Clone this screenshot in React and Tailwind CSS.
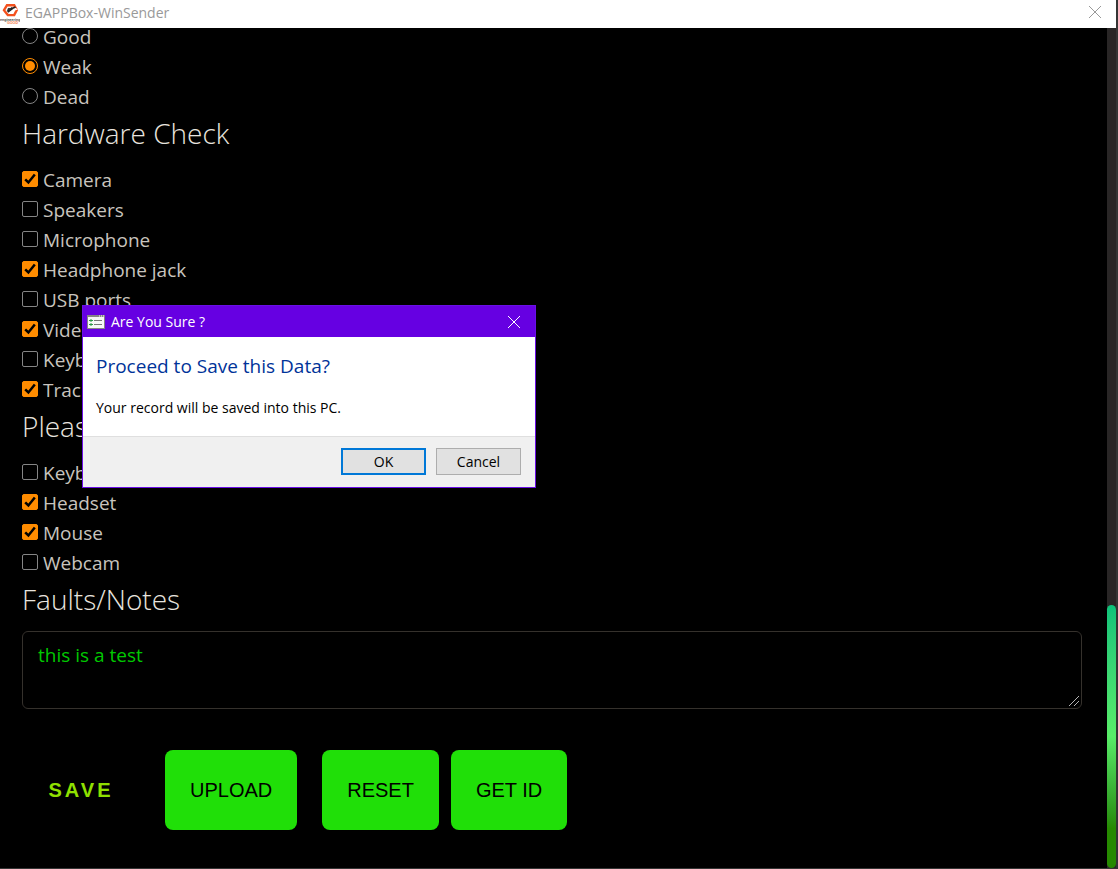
import { useState } from "react";

const battery = ["Good", "Weak", "Dead"];

const hardware = [
  ["Camera", true],
  ["Speakers", false],
  ["Microphone", false],
  ["Headphone jack", true],
  ["USB ports", false],
  ["Video ports", true],
  ["Keyboard", false],
  ["Trackpad", true],
];

const accessories = [
  ["Keyboard", false],
  ["Headset", true],
  ["Mouse", true],
  ["Webcam", false],
];

function AppLogo() {
  return (
    <svg viewBox="0 0 20 24" className="h-6 w-5 shrink-0" aria-hidden="true">
      <path d="M7 3.2h7.2l2.600 4.900-2.600 5H7.800L4 8.200z" fill="none" stroke="#f4511e" strokeWidth="2.400" />
      <path d="M14 5l4 2.500-3.500 1z" fill="#fff" />
      <path d="M7.500 9.800l5-3.800" stroke="#222" strokeWidth="2.400" />
      <circle cx="9" cy="7.200" r="1.500" fill="#333" />
      <path d="M12 6.500l3.500-1.500" stroke="#222" strokeWidth="1.800" />
      <text x="0" y="18.500" fontSize="3.600" fontWeight="700" fill="#444" fontFamily="Liberation Sans, sans-serif">
        engineering
      </text>
      <text x="7" y="22" fontSize="3.600" fontWeight="700" fill="#f4733d" fontFamily="Liberation Sans, sans-serif">
        GOOD
      </text>
    </svg>
  );
}

function CloseIcon() {
  return (
    <svg viewBox="0 0 12 12" className="size-3" fill="none" stroke="currentColor" aria-hidden="true">
      <path d="M0 0l12 12M12 0L0 12" />
    </svg>
  );
}

function FormIcon() {
  return (
    <svg viewBox="0 0 18 14" className="h-3.5 w-[18px] shrink-0" aria-hidden="true">
      <rect x="0.500" y="0.500" width="17" height="13" fill="#f7f7f7" stroke="#858585" />
      <path d="M1 1.500h16" stroke="#858585" />
      <path d="M12 1h1M14 1h1M16 1h1" stroke="#fff" />
      <path d="M7 5.500h8M7 9.500h8" stroke="#777" />
      <path d="M2 5.500h4M2 9.500h4" stroke="#2d9a46" />
      <path d="M4 4v3M4 8v3" stroke="#2d9a46" />
    </svg>
  );
}

function Tick() {
  return (
    <svg
      viewBox="0 0 16 16"
      className="pointer-events-none col-start-1 row-start-1 hidden size-4 peer-checked:block"
      fill="none"
      stroke="#000"
      strokeWidth="2.500"
      aria-hidden="true"
    >
      <path d="M3.200 8.300l3.200 3.200L12.800 3.500" />
    </svg>
  );
}

function CheckRow({ label, checked }) {
  return (
    <label className="flex h-[30px] items-center gap-[5px]">
      <span className="-mt-0.5 grid">
        <input
          type="checkbox"
          defaultChecked={checked}
          className="peer col-start-1 row-start-1 size-4 appearance-none rounded-[2px] border border-[#858585] bg-black checked:border-[#ff8c00] checked:bg-[#ff8c00]"
        />
        <Tick />
      </span>
      {label}
    </label>
  );
}

function RadioRow({ label, checked }) {
  return (
    <label className="flex h-[30px] items-center gap-[5px]">
      <input
        type="radio"
        name="battery"
        defaultChecked={checked}
        className="-mt-0.5 size-4 appearance-none rounded-full border border-[#858585] bg-black bg-clip-content p-0.5 checked:border-[#ff8c00] checked:bg-[#ff8c00]"
      />
      {label}
    </label>
  );
}

function Heading({ children }) {
  return <h2 className="mb-2.5 text-[28px] leading-[43px] font-light text-[#e8e4df]">{children}</h2>;
}

function ActionButton({ children, className }) {
  return (
    <button
      type="button"
      className={"h-20 rounded-lg bg-[#20df08] px-[25px] text-[20px] font-medium text-black " + className}
    >
      {children}
    </button>
  );
}

function ConfirmDialog({ onClose }) {
  const button = "h-[27px] w-[85px] bg-[#e1e1e1] leading-5 ";
  return (
    <div
      role="dialog"
      aria-labelledby="dialog-title"
      className="absolute top-[305px] left-[82px] w-[454px] border border-[#6a0fe6] bg-white text-[14px] text-black"
    >
      <div className="flex h-[31px] items-center gap-1.5 bg-[#6600e2] pr-[15px] pl-1 text-white">
        <FormIcon />
        <span id="dialog-title" className="flex-1">Are You Sure ?</span>
        <button type="button" aria-label="Close" onClick={onClose}>
          <CloseIcon />
        </button>
      </div>
      <div className="h-[99px] px-[13px] pt-[15px]">
        <h3 className="text-[19px] leading-7 text-[#003399]">Proceed to Save this Data?</h3>
        <p className="mt-4 leading-6">Your record will be saved into this PC.</p>
      </div>
      <div className="flex h-[51px] items-start justify-end gap-2.5 border-t border-[#dfdfdf] bg-[#f0f0f0] pt-[11px] pr-3.5">
        <button type="button" onClick={onClose} className={button + "border-2 border-[#0078d7]"}>
          OK
        </button>
        <button type="button" onClick={onClose} className={button + "border border-[#adadad]"}>
          Cancel
        </button>
      </div>
    </div>
  );
}

export default function App() {
  const [open, setOpen] = useState(true);
  return (
    <div className="relative flex h-screen flex-col overflow-hidden border-r-2 border-b border-[#353535] bg-black font-['Open_Sans','Noto_Sans',sans-serif]">
      <header className="flex h-7 shrink-0 items-center gap-[5px] bg-white pr-[15px] text-[#999]">
        <AppLogo />
        <h1 className="-mt-1 flex-1 text-[14px]">EGAPPBox-WinSender</h1>
        <button type="button" aria-label="Close window" className="-mt-1">
          <CloseIcon />
        </button>
      </header>

      <div className="flex min-h-0 flex-1">
        <main className="min-w-0 flex-1 overflow-hidden pr-[25px] pl-[22px] text-[19px] text-[#c8c4be]">
          <form className="-mt-1.5" onSubmit={(event) => event.preventDefault()}>
            {battery.map((name) => (
              <RadioRow key={name} label={name} checked={name === "Weak"} />
            ))}

            <Heading>Hardware Check</Heading>
            {hardware.map(([name, checked]) => (
              <CheckRow key={name} label={name} checked={checked} />
            ))}

            <Heading>Please Check</Heading>
            {accessories.map(([name, checked]) => (
              <CheckRow key={name} label={name} checked={checked} />
            ))}

            <Heading>Faults/Notes</Heading>
            <div className="relative">
              <textarea
                aria-label="Faults/Notes"
                defaultValue="this is a test"
                className="block h-[78px] w-full resize-y rounded-md border border-[#35312c] bg-black px-[15px] py-2 leading-[30px] text-[#00c800] [&::-webkit-resizer]:hidden"
              />
              <svg
                viewBox="0 0 12 12"
                className="pointer-events-none absolute right-0.5 bottom-0.5 size-3"
                stroke="#b5b5b5"
                aria-hidden="true"
              >
                <path d="M1 11L11 1M6 11l5-5" />
              </svg>
            </div>

            <div className="mt-[41px] flex font-['Liberation_Sans',Arial,sans-serif]">
              <button
                type="button"
                className="h-20 w-[118px] text-[20px] font-bold tracking-[3px] text-[#90e000]"
              >
                SAVE
              </button>
              <ActionButton className="ml-[25px]">UPLOAD</ActionButton>
              <ActionButton className="ml-[25px]">RESET</ActionButton>
              <ActionButton className="ml-3">GET ID</ActionButton>
            </div>
          </form>
        </main>

        <div className="flex w-[9px] flex-col justify-end bg-[#292626]" aria-hidden="true">
          <div className="h-[31.3%] rounded-full bg-linear-to-t from-[#268a00] from-15% via-[#59ed68] via-50% to-[#0ac27a]" />
        </div>
      </div>

      {open && <ConfirmDialog onClose={() => setOpen(false)} />}
    </div>
  );
}
